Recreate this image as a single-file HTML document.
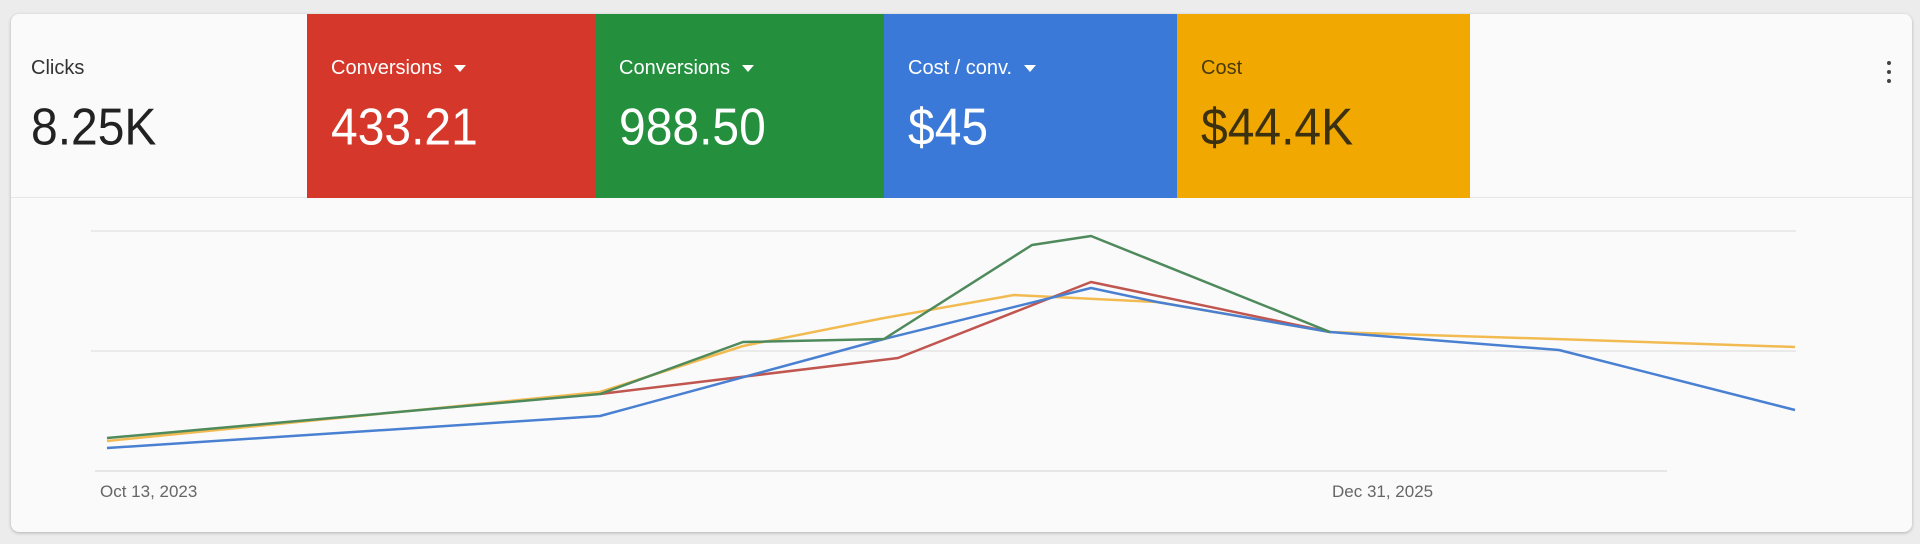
<!DOCTYPE html>
<html><head><style>
body{margin:0;width:1920px;height:544px;background:#ececec;font-family:"Liberation Sans",sans-serif;position:relative;overflow:hidden}
.card{position:absolute;left:11px;top:14px;width:1901px;height:518px;background:#fafafa;border-radius:8px;box-shadow:0 1px 3px rgba(0,0,0,.25)}
.t{position:absolute;top:14px;height:184px}
.lab{position:absolute;left:24px;top:43px;font-size:20px;color:#fff;white-space:nowrap}
.val{position:absolute;left:24px;top:84px;font-size:48px;color:#fff;white-space:nowrap;transform:scaleY(1.08);transform-origin:left top}
.tri{display:inline-block;width:0;height:0;border-left:6px solid transparent;border-right:6px solid transparent;border-top:7px solid #fff;margin-left:12px;vertical-align:middle}
.ax{position:absolute;top:482px;font-size:17px;color:#666}
.dot{position:absolute;left:1887px;width:4px;height:4px;border-radius:2px;background:#444}
</style></head><body>
<div class="card"></div>
<div style="position:absolute;left:11px;top:197px;width:1901px;height:1px;background:#e6e6e6"></div>
<div class="t" style="left:11px;width:296px"><div class="lab" style="left:20px;color:#333">Clicks</div><div class="val" style="left:20px;color:#222">8.25K</div></div>
<div class="t" style="left:307px;width:288px;background:#d6372b"><div class="lab">Conversions<span class="tri"></span></div><div class="val">433.21</div></div>
<div class="t" style="left:595px;width:289px;background:#24903e"><div class="lab">Conversions<span class="tri"></span></div><div class="val">988.50</div></div>
<div class="t" style="left:884px;width:293px;background:#3a79d8"><div class="lab">Cost / conv.<span class="tri"></span></div><div class="val">$45</div></div>
<div class="t" style="left:1177px;width:293px;background:#f1a800"><div class="lab" style="color:#4a3a10">Cost</div><div class="val" style="color:#3b3010">$44.4K</div></div>
<div class="dot" style="top:61px"></div><div class="dot" style="top:70px"></div><div class="dot" style="top:79px"></div>
<svg style="position:absolute;left:0;top:0" width="1920" height="544">
<line x1="91" y1="231" x2="1796" y2="231" stroke="#e4e4e4" stroke-width="1.5"/>
<line x1="91" y1="351" x2="1796" y2="351" stroke="#e4e4e4" stroke-width="1.5"/>
<line x1="95" y1="471" x2="1667" y2="471" stroke="#e0e0e0" stroke-width="1.5"/>
<g fill="none" stroke-width="2.5" stroke-linejoin="round">
<polyline stroke="#f2bb52" points="107,441 600,392 743,346 884,318 1014,295 1157,302 1330,332 1555,339 1795,347"/>
<polyline stroke="#c0564f" points="600,394 898,358 1091,282 1330,332"/>
<polyline stroke="#4a80d2" points="107,448 600,416 884,339 1091,288 1157,302 1330,332 1559,350 1795,410"/>
<polyline stroke="#4f8a5c" points="107,438 600,394 743,342 884,339 1032,245 1091,236 1330,332"/>
</g></svg>
<div class="ax" style="left:100px">Oct 13, 2023</div>
<div class="ax" style="left:1332px">Dec 31, 2025</div>
</body></html>
